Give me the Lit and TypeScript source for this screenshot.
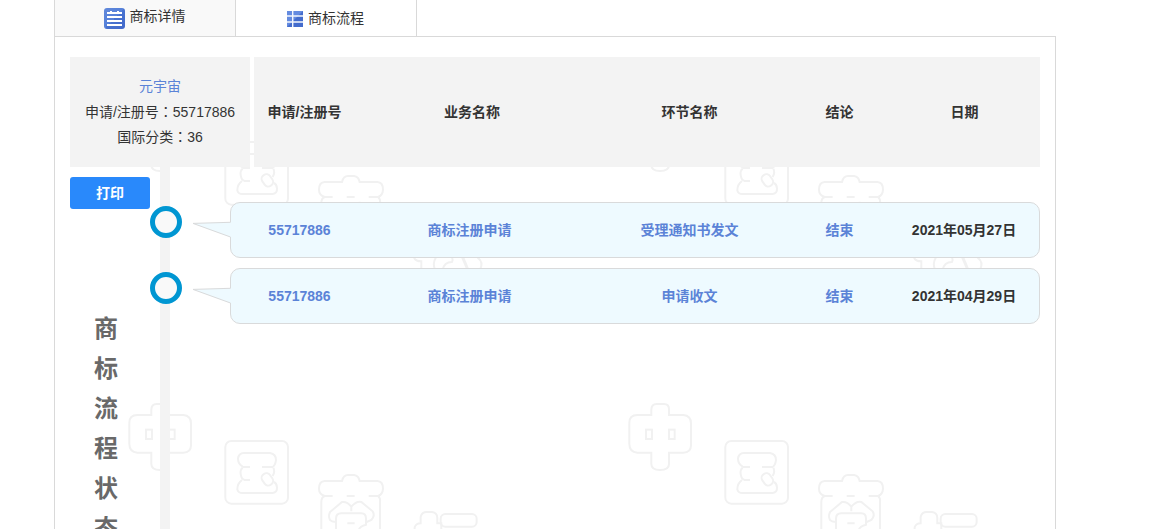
import { LitElement, html, css } from "lit";
import { customElement, property } from "lit/decorators.js";

interface Step {
  no: string;
  business: string;
  stage: string;
  result: string;
  date: string;
}

const STEPS: Step[] = [
  { no: "55717886", business: "商标注册申请", stage: "受理通知书发文", result: "结束", date: "2021年05月27日" },
  { no: "55717886", business: "商标注册申请", stage: "申请收文", result: "结束", date: "2021年04月29日" },
];

const COLUMNS = ["申请/注册号", "业务名称", "环节名称", "结论", "日期"];

/* Repeating outline pattern behind the panel. */
@customElement("panel-watermark")
class PanelWatermark extends LitElement {
  static styles = css`
    :host { display: block; }
    svg { display: block; width: 100%; height: 100%; }
  `;
  render() {
    return html`<svg aria-hidden="true">
      <defs>
        <pattern id="tile" width="500" height="299" patternUnits="userSpaceOnUse">
          <g transform="translate(45 54) scale(.33333)" fill="none" stroke="#f1f1f1" stroke-width="6">
            <path d="M154 75V60Q154 42 170 42H192Q207 42 207 58V75H250Q273 77 273 100V166Q273 188 250 188H207V222Q207 240 180 240Q154 240 154 222V188H112Q88 186 88 162V98Q88 75 112 75Z" />
            <rect x="138" y="119" width="18" height="28" />
            <rect x="207" y="119" width="17" height="28" />
            <rect x="376" y="153" width="188" height="188" rx="18" />
            <path d="M450 231H430Q414 222 414 206Q416 189 432 189H510Q528 192 528 210Q526 226 518 231H486" />
            <path d="M428 232Q420 240 422 252Q424 268 434 270H450M520 233Q526 244 518 258M426 270Q412 280 412 298Q414 309 428 309H518Q532 307 531 292Q530 280 522 276" />
            <rect x="488" y="249" width="28" height="38" rx="13" transform="rotate(-35 502 268)" />
            <path d="M698 318H674Q657 312 657 296Q657 274 674 273H726Q730 255 744 255H762Q776 257 779 273H832Q849 274 849 296Q848 314 834 318H806M740 318H764M674 318Q664 322 664 336V450M834 318Q842 324 840 336V450" />
            <path d="M754 364V350Q742 334 726 336L690 366Q684 380 690 390Q700 398 708 394M754 350Q770 332 784 336L818 364Q826 376 814 390L800 396" />
            <path d="M708 450V386Q708 370 724 370H784Q798 370 798 386V404Q780 408 776 420M742 400H764" />
            <path d="M944 424V412Q948 400 962 400V380Q966 366 980 366H996Q1012 368 1012 384V400H1024V418" />
            <rect x="1022" y="372" width="108" height="38" rx="14" />
          </g>
          <g transform="translate(345 123) scale(.33333)" fill="none" stroke="#f1f1f1" stroke-width="6">
            <path d="M42 292Q46 304 64 304V330M108 292Q96 312 106 330M128 330Q132 306 156 306Q160 300 156 292M232 292Q252 306 240 330" />
            <path d="M188 292L204 330" stroke-width="9" />
          </g>
        </pattern>
      </defs>
      <rect width="100%" height="100%" fill="url(#tile)" />
    </svg>`;
  }
}

@customElement("app-root")
class AppRoot extends LitElement {
  @property({ attribute: false }) steps: Step[] = STEPS;

  static styles = css`
    :host {
      display: flex;
      flex-direction: column;
      box-sizing: border-box;
      height: 100vh;
      overflow: hidden;
      padding: 0 95px 0 54px;
      background: #fff;
      color: #333;
      font: 14px/20px "Liberation Sans", "Noto Sans CJK SC", sans-serif;
    }
    a { color: #5b83d7; text-decoration: none; }
    .tabs { display: flex; flex: none; height: 36px; }
    .tab {
      display: flex;
      align-items: center;
      justify-content: center;
      gap: 5px;
      box-sizing: border-box;
      width: 181px;
      padding: 0 1px 0 0;
      border: 0 solid #d9d9d9;
      border-right-width: 1px;
      background: #fff;
      color: inherit;
      font: inherit;
    }
    .tab:first-child { width: 182px; border-left-width: 1px; background: #f9f9f9; }
    .tab svg { flex: none; }
    .tab span { padding-bottom: 4px; }
    .tab.current { padding-top: 2px; }
    .tab.current span { padding-bottom: 2px; }
    .panel {
      position: relative;
      flex: 1;
      min-height: 0;
      display: grid;
      grid-template-columns: 180px minmax(0, 1fr);
      column-gap: 4px;
      padding: 20px 15px 0;
      border: 1px solid #d9d9d9;
      border-bottom: 0;
    }
    .watermark { position: absolute; inset: 0; }
    .side, .flow { position: relative; }
    .side { display: flex; flex-direction: column; }
    .mark {
      display: flex;
      flex: none;
      flex-direction: column;
      justify-content: center;
      box-sizing: border-box;
      height: 110px;
      padding-bottom: 2px;
      background: #f3f3f3;
      line-height: 25px;
      text-align: center;
    }
    .mark > * { height: 25px; }
    .colon { font-family: "Noto Sans CJK TC", sans-serif; }
    .lane { display: flex; flex: 1; gap: 10px; }
    .label { width: 80px; padding-top: 10px; }
    .rail { width: 10px; background: #f3f3f3; }
    .print {
      display: block;
      width: 100%;
      height: 32px;
      padding: 0;
      border: 0;
      border-radius: 3px;
      background: #2989fb;
      color: #fff;
      font: inherit;
      font-weight: 700;
    }
    .title {
      width: 24px;
      margin: 100px 0 0 24px;
      color: #696969;
      font-size: 24px;
      font-weight: 700;
      line-height: 40px;
      word-break: break-all;
    }
    .flow, .flow thead, .flow tbody { display: block; }
    .flow th, .flow td { padding: 0; text-align: center; font-weight: 700; }
    .head, .step {
      display: grid;
      grid-template-columns: 101fr 234fr 201fr 99fr 151fr;
      align-items: center;
    }
    .head { height: 110px; background: #f3f3f3; }
    .flow tbody { display: grid; gap: 10px; margin: 35px 0 0 -24px; }
    .step {
      position: relative;
      grid-template-columns: 101fr 239fr 201fr 99fr 150fr;
      box-sizing: border-box;
      height: 56px;
      padding-left: 18px;
      border: 1px solid #d9dadb;
      border-radius: 10px;
      background: #eefaff;
    }
    .node {
      position: absolute;
      top: 3px;
      left: -81px;
      box-sizing: border-box;
      width: 32px;
      height: 32px;
      border: 5px solid #0096d2;
      border-radius: 50%;
      background: #f9f9f9;
    }
    .tail { position: absolute; top: 18px; left: -39px; }
  `;

  private stepRow(s: Step) {
    return html`<tr class="step">
      <td>
        <span class="node"></span>
        <svg class="tail" width="40" height="18" viewBox="0 0 40 18" aria-hidden="true">
          <path d="M38 1.3L1 2.4L38 16L40 16V1.3Z" fill="#eefaff" />
          <path d="M38.5 1.3L1 2.4L38.5 16" fill="none" stroke="#d9dadb" />
        </svg>
        <a href="#">${s.no}</a>
      </td>
      <td><a href="#">${s.business}</a></td>
      <td><a href="#">${s.stage}</a></td>
      <td><a href="#">${s.result}</a></td>
      <td>${s.date}</td>
    </tr>`;
  }

  render() {
    return html`
      <nav class="tabs">
        <button class="tab" type="button">
          <svg width="21" height="21" viewBox="0 0 21 21" aria-hidden="true">
            <defs><linearGradient id="a" x2="1" y2="1"><stop stop-color="#6189db" /><stop offset=".5" stop-color="#5580d9" /><stop offset=".5" stop-color="#4872d0" /><stop offset="1" stop-color="#4168ca" /></linearGradient></defs>
            <rect width="21" height="21" rx="3" fill="url(#a)" />
            <path d="M3 5H18M3 9H18M3 13H18M3 17H18" stroke="#fff" stroke-width="2" />
            <path d="M7 3V5M14 3V5" stroke="#fff" stroke-width="2" />
          </svg>
          <span>商标详情</span>
        </button>
        <button class="tab current" type="button">
          <svg width="16" height="16" viewBox="0 0 16 16" aria-hidden="true">
            <rect width="16" height="16" fill="#446ccd" />
            <path d="M0 0H16L0 16Z" fill="#648be0" />
            <path d="M5.7 0V16M0 5H16M0 11H16" stroke="#f4f7fd" stroke-width="1.4" />
          </svg>
          <span>商标流程</span>
        </button>
      </nav>
      <main class="panel">
        <panel-watermark class="watermark"></panel-watermark>
        <section class="side">
          <div class="mark">
            <a href="#">元宇宙</a>
            <div>申请/注册号<span class="colon" lang="zh-TW">：</span>55717886</div>
            <div>国际分类<span class="colon" lang="zh-TW">：</span>36</div>
          </div>
          <div class="lane">
            <div class="label">
              <button class="print" type="button">打印</button>
              <h2 class="title">商标流程状态</h2>
            </div>
            <div class="rail"></div>
          </div>
        </section>
        <table class="flow">
          <thead>
            <tr class="head">${COLUMNS.map((c) => html`<th scope="col">${c}</th>`)}</tr>
          </thead>
          <tbody>${this.steps.map((s) => this.stepRow(s))}</tbody>
        </table>
      </main>
    `;
  }
}
